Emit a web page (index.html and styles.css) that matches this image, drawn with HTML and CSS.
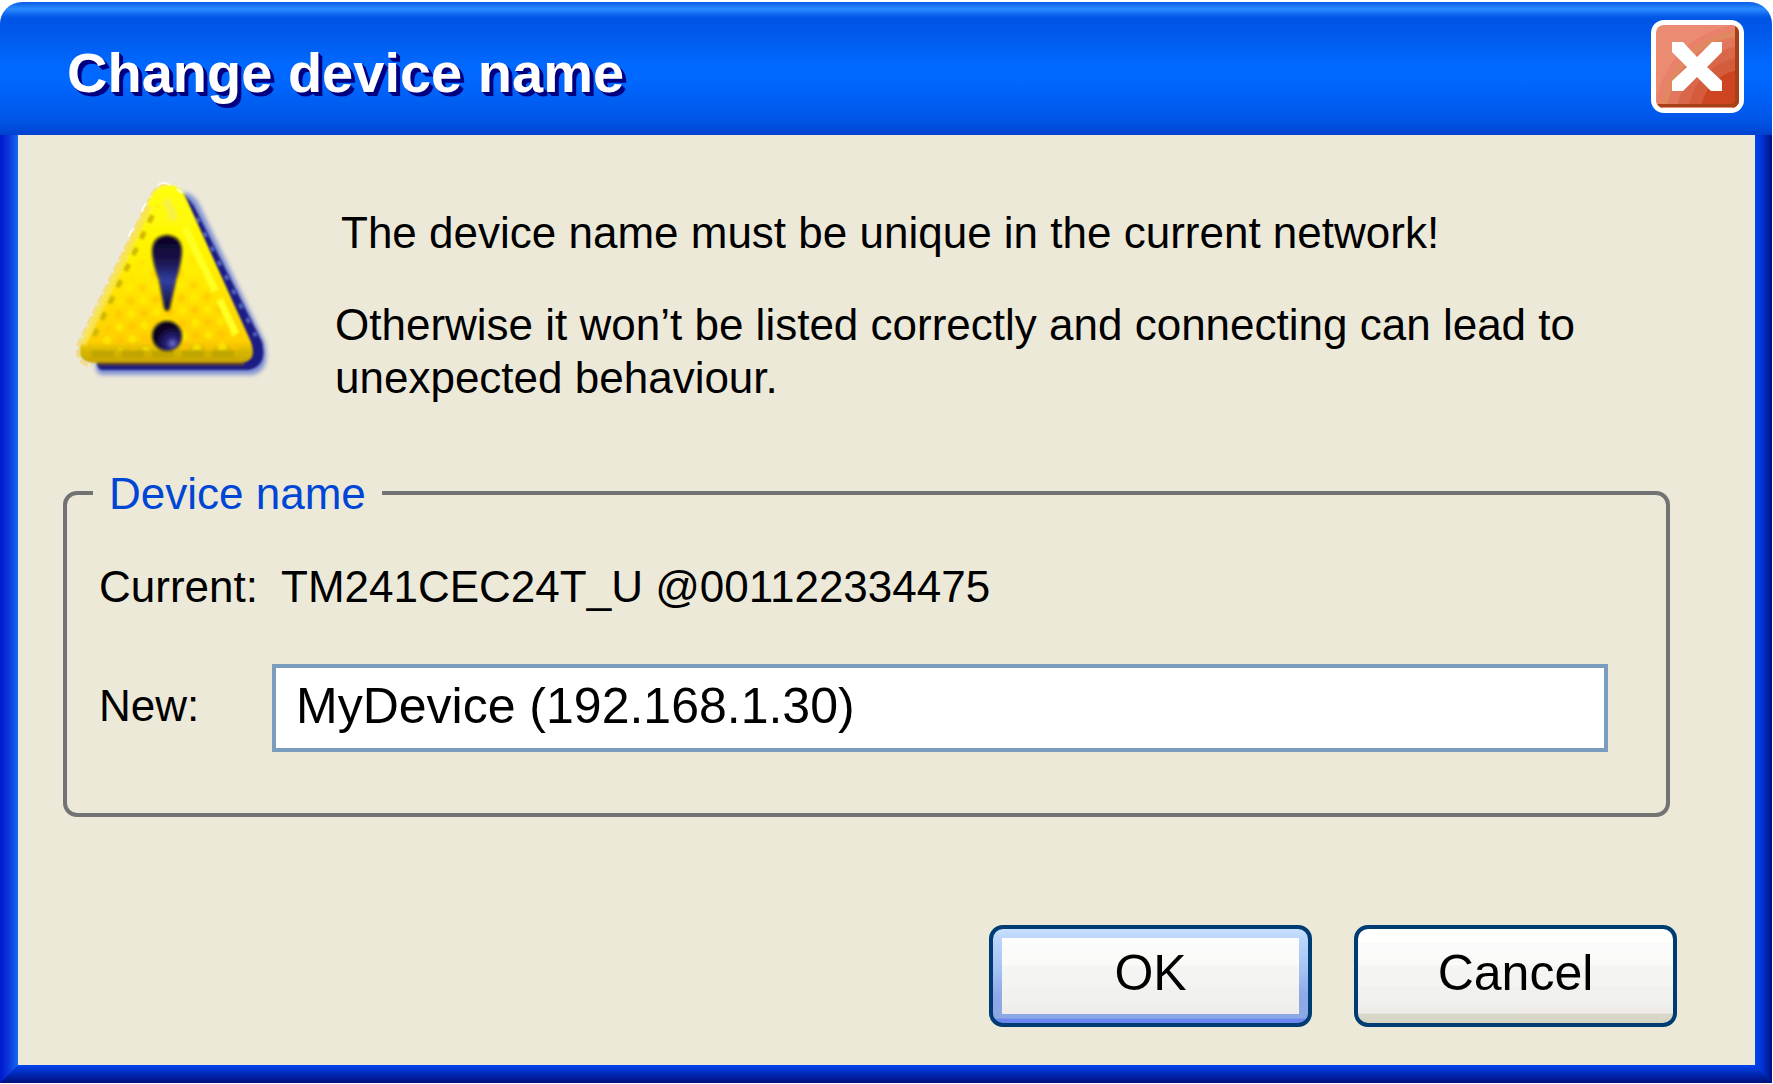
FILE: index.html
```html
<!DOCTYPE html>
<html lang="en">
<head>
<meta charset="utf-8">
<title>Change device name</title>
<link rel="stylesheet" href="styles.css">
</head>
<body>
<main class="dialog" role="dialog" aria-labelledby="dialog-title">
  <header class="titlebar">
    <h1 class="title" id="dialog-title">Change device name</h1>
    <button class="close" type="button" aria-label="Close">
      <svg class="close-icon" viewBox="0 0 93 93" aria-hidden="true">
        <defs>
          <clipPath id="face"><rect x="5" y="5" width="83" height="83" rx="8"/></clipPath>
        </defs>
        <rect width="93" height="93" rx="13" fill="#fff"/>
        <g clip-path="url(#face)">
          <rect x="5" y="5" width="83" height="83" fill="#ea8b72"/>
          <circle cx="96" cy="96" r="92" fill="#e8806a"/>
          <circle cx="96" cy="96" r="86" fill="#e08860"/>
          <circle cx="96" cy="96" r="80" fill="#e2765c"/>
          <circle cx="96" cy="96" r="70" fill="#d9684a"/>
          <circle cx="96" cy="96" r="59" fill="#d45c3c"/>
          <circle cx="96" cy="96" r="47" fill="#cc4420"/>
          <path d="M84 5h4v83H5v-4h75q4 0 4-4z" fill="#a84016"/>
          <path d="M5 88h83" stroke="#e09078" stroke-width="2"/>
        </g>
        <path d="M21 22h11l14 15 15-15h10v10L56 47l15 14v10H60L46 57 32 71H21V61l15-14L21 32z" fill="#fff"/>
      </svg>
    </button>
  </header>

  <div class="frame">
    <div class="edge edge-left"></div>
    <div class="edge edge-right"></div>
    <div class="edge edge-bottom"></div>
    <form class="client">
      <section class="notice">
        <svg class="warning" viewBox="3 1 218 210" role="img" aria-label="Warning">
          <defs>
            <linearGradient id="sun" x1="0" y1="0" x2="0" y2="1">
              <stop offset="0" stop-color="#ffff10"/>
              <stop offset=".4" stop-color="#fff200"/>
              <stop offset=".88" stop-color="#ffcf00"/>
              <stop offset=".93" stop-color="#d8b800"/>
              <stop offset="1" stop-color="#c8a400"/>
            </linearGradient>
            <pattern id="mottle" width="18" height="18" patternUnits="userSpaceOnUse" patternTransform="rotate(42)">
              <rect x="1" y="1" width="8" height="8" rx="4" fill="#fff200"/>
              <rect x="10" y="10" width="8" height="8" rx="4" fill="#ffc400"/>
            </pattern>
            <linearGradient id="fade" x1="0" y1="0" x2="0" y2="1">
              <stop offset=".35" stop-color="#000"/>
              <stop offset=".6" stop-color="#fff"/>
            </linearGradient>
            <mask id="lower"><rect width="220" height="220" fill="url(#fade)"/></mask>
            <radialGradient id="ball" cx=".68" cy=".75" r=".6">
              <stop offset="0" stop-color="#6a70c8"/>
              <stop offset=".35" stop-color="#282078"/>
              <stop offset="1" stop-color="#08001c"/>
            </radialGradient>
            <linearGradient id="drop" x1="0" y1="0" x2="0" y2="1">
              <stop offset="0" stop-color="#080020"/>
              <stop offset=".35" stop-color="#1c1450"/>
              <stop offset=".6" stop-color="#3040a0"/>
              <stop offset="1" stop-color="#100830"/>
            </linearGradient>
            <filter id="soft"><feGaussianBlur stdDeviation="1"/></filter>
            <filter id="softer"><feGaussianBlur stdDeviation="2"/></filter>
          </defs>
          <path d="M124 22Q134 24 139 34L205 172Q211 202 192 205H42Q34 204 36 192Z" fill="#8494d4" filter="url(#softer)"/>
          <path d="M121 24Q130 28 136 40L202 172Q208 197 188 200H42Q36 198 38 190Z" fill="#1c1c84" filter="url(#soft)"/>
          <path d="M137 48L196 166" stroke="#5868c0" stroke-width="4" stroke-dasharray="5 11" fill="none" filter="url(#soft)"/>
          <path d="M108 14Q96 15 90 28L18 174Q14 194 32 196" fill="none" stroke="#f4dc90" stroke-width="3" stroke-dasharray="9 3"/>
          <g filter="url(#soft)">
            <path d="M108 15Q97 15 91 27L22 170Q14 192 34 193H180Q198 192 191 172L127 30Q121 15 108 15Z" fill="url(#sun)"/>
            <path d="M108 30L36 180H182Z" fill="url(#mottle)" mask="url(#lower)" opacity=".65"/>
            <path d="M23 174L89 36" stroke="#f8e450" stroke-width="6" fill="none"/>
            <path d="M34 166L97 36" stroke="#d0b800" stroke-width="5" stroke-dasharray="8 10" fill="none"/>
            <path d="M105 30Q113 40 113 50" stroke="#f8f040" stroke-width="8" fill="none"/>
            <path d="M125 58L176 164" stroke="#ffff20" stroke-width="7" stroke-dasharray="70 9" fill="none"/>
            <path d="M32 184H182" stroke="#b8a000" stroke-width="7" stroke-dasharray="22 8" fill="none" opacity=".7"/>
            <path d="M38 194H184" stroke="#604028" stroke-width="3"/>
            <path d="M92 80Q93 66 107 65Q121 66 122 80Q122 92 116 110L110 138Q107 144 104 138L99 110Q92 92 92 80Z" fill="url(#drop)" stroke="#685c10" stroke-width="2"/>
            <circle cx="107" cy="166" r="15" fill="url(#ball)" stroke="#685c10" stroke-width="2"/>
          </g>
          <path d="M98 15q6-4 12 0M82 42q1-6 5-9M69 67q1-6 5-8M117 19l5 4" stroke="#fff" stroke-width="2" fill="none" opacity=".8"/>
        </svg>
        <div class="message">
          <p class="lead">The device name must be unique in the current network!</p>
          <p>Otherwise it won’t be listed correctly and connecting can lead to unexpected behaviour.</p>
        </div>
      </section>

      <fieldset class="group">
        <legend>Device name</legend>
        <div class="fields">
          <span id="current-label">Current:</span>
          <output class="current" aria-labelledby="current-label">TM241CEC24T_U @001122334475</output>
          <label class="name-label" for="new-name">New:</label>
          <input class="name-input" id="new-name" type="text" value="MyDevice (192.168.1.30)">
        </div>
      </fieldset>

      <div class="actions">
        <button class="button button-default" type="submit">OK</button>
        <button class="button" type="button">Cancel</button>
      </div>
    </form>
  </div>
</main>
</body>
</html>
```
FILE: styles.css
```css
* {
  box-sizing: border-box;
}

body {
  margin: 0;
  background: #fff;
  color: #000;
  font: 44px/53px "Liberation Sans", Arial, sans-serif;
}

.dialog {
  margin: 2px 1px 2px 0;
}

.titlebar {
  display: flex;
  justify-content: space-between;
  align-items: flex-start;
  height: 133px;
  padding: 18px 28px 0 67px;
  border-radius: 22px 22px 0 0;
  background: linear-gradient(#0a5ce8 0, #2a8cff 7px, #0a62ee 13px, #0054e4 17px, #0058ea 30px, #0068ff 62px, #0068ff 78px, #0058ec 112px, #0050e0 124px, #0040cc 133px);
}

.title {
  margin: 0;
  padding-top: 21px;
  color: #fff;
  font-size: 56px;
  line-height: 64px;
  text-shadow: 1px 1px #000080, 2px 2px #000080, 3px 3px #000080, 4px 4px #000080;
}

.close {
  flex: none;
  width: 93px;
  height: 93px;
  padding: 0;
  border: 0;
  background: none;
}

.close-icon,
.warning {
  display: block;
}

.frame {
  display: grid;
  grid-template-columns: 18px minmax(0, 1fr) 17px;
  grid-template-rows: auto 18px;
}

.edge-left {
  grid-area: 1 / 1 / 3 / 2;
  background: linear-gradient(to right, #0019cf, #0c38dc 50%, #166aee);
}

.edge-right {
  grid-area: 1 / 3 / 3 / 4;
  background: linear-gradient(to right, #0045ee, #0030cc 50%, #00107c);
}

.edge-bottom {
  grid-area: 2 / 1 / 3 / 4;
  background: linear-gradient(#0045ee, #0028b4 50%, #00107c);
  clip-path: polygon(18px 0, calc(100% - 17px) 0, 100% 100%, 0 100%);
}

.client {
  grid-area: 1 / 2 / 2 / 3;
  padding: 36px 78px 38px 45px;
  background: #ede9d8;
}

.notice {
  display: flex;
  gap: 54px;
}

.warning {
  flex: none;
  width: 218px;
  height: 210px;
}

.message {
  padding-top: 35px;
}

.message p {
  margin: 0;
}

.message .lead {
  margin-bottom: 39px;
  padding-left: 6px;
}

.group {
  min-width: 0;
  margin: 61px 7px 0 0;
  padding: 0;
  border: 4px solid #737373;
  border-radius: 14px;
}

.group legend {
  margin-left: 26px;
  padding: 2px 16px 0;
  color: #0046d5;
}

.fields {
  display: grid;
  grid-template-columns: 173px minmax(0, 1fr);
  row-gap: 51px;
  align-items: center;
  padding: 40px 58px 61px 32px;
}

.current {
  padding-left: 9px;
}

.name-label {
  padding-bottom: 6px;
}

.name-input {
  width: 100%;
  height: 88px;
  padding: 0 20px 4px;
  border: 4px solid #7a9cbf;
  border-radius: 0;
  background: #fff;
  color: #000;
  font: inherit;
  font-size: 50px;
}

.actions {
  display: flex;
  justify-content: flex-end;
  gap: 42px;
  margin-top: 108px;
}

.button {
  width: 323px;
  height: 102px;
  padding: 0 0 6px;
  border: 4px solid #003c74;
  border-radius: 14px;
  background: linear-gradient(#fff 0 8px, #fffffa 13px, #fafafa 14px, #fafaf8 36px, #f5f5f4 37px, #f4f4f2 57px, #f1f1ed 58px, #f0f0ec 76px, #efecea 77px, #eeebe8 84px, #dad8ca 85px, #d6d3c4);
  color: #000;
  font: inherit;
  font-size: 50px;
}

.button-default {
  background:
    linear-gradient(#fff, #fafafa 8px, #fafaf6 27px, #f5f5f4 28px, #f3f3f1 48px, #f1f1ed 49px, #f0f0ec 66px, #efebea) center / calc(100% - 18px) calc(100% - 18px) no-repeat,
    linear-gradient(#c8e0ff, #bcd6fa 9px, #a4c4f4 40px, #90a8e8 66px, #8aa8e4 89px, #6c88f0 90px);
}
```
